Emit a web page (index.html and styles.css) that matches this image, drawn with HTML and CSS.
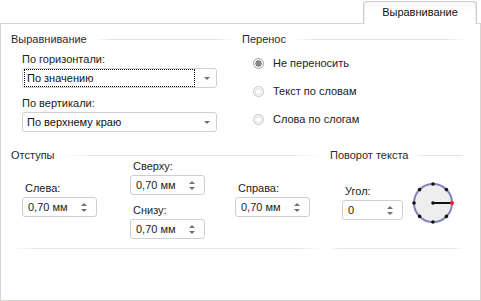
FILE: index.html
```html
<!DOCTYPE html>
<html lang="ru">
<head>
    <meta charset="UTF-8">
    <meta name="viewport" content="width=device-width, initial-scale=1.0">
    <title>Формат ячеек</title>
    <link rel="stylesheet" href="styles.css">
</head>
<body>

    <!-- Onglets -->
    <div class="tabs">
        <div class="tab">Выравнивание</div>
    </div>

    <div class="panel">

        <!-- Выравнивание / Перенос -->
        <div class="row row-top">
            <div class="group">
                <div class="group-title"><span>Выравнивание</span></div>
                <div class="field field-first">
                    <div class="label">По горизонтали:</div>
                    <div class="combo">
                        <span class="combo-value focused">По значению</span>
                        <span class="combo-arrow"></span>
                    </div>
                </div>
                <div class="field">
                    <div class="label">По вертикали:</div>
                    <div class="combo">
                        <span class="combo-value">По верхнему краю</span>
                        <span class="combo-arrow"></span>
                    </div>
                </div>
            </div>

            <div class="group">
                <div class="group-title"><span>Перенос</span></div>
                <div class="radios">
                    <div class="radio-row"><span class="radio checked"></span>Не переносить</div>
                    <div class="radio-row"><span class="radio"></span>Текст по словам</div>
                    <div class="radio-row"><span class="radio"></span>Слова по слогам</div>
                </div>
            </div>
        </div>

        <!-- Отступы / Поворот текста -->
        <div class="row row-bottom">
            <div class="group">
                <div class="group-title"><span>Отступы</span></div>
                <div class="indents">
                    <div class="col">
                        <div class="label lbl-spin">Слева:</div>
                        <div class="spin"><span>0,70 мм</span><span class="spin-arrows"><i class="up"></i><i class="down"></i></span></div>
                    </div>
                    <div class="col">
                        <div class="label lbl-spin">Сверху:</div>
                        <div class="spin"><span>0,70 мм</span><span class="spin-arrows"><i class="up"></i><i class="down"></i></span></div>
                        <div class="label lbl-spin lbl-second">Снизу:</div>
                        <div class="spin"><span>0,70 мм</span><span class="spin-arrows"><i class="up"></i><i class="down"></i></span></div>
                    </div>
                    <div class="col">
                        <div class="label lbl-spin">Справа:</div>
                        <div class="spin"><span>0,70 мм</span><span class="spin-arrows"><i class="up"></i><i class="down"></i></span></div>
                    </div>
                </div>
            </div>

            <div class="group">
                <div class="group-title"><span>Поворот текста</span></div>
                <div class="rotate">
                    <div class="col">
                        <div class="label lbl-spin">Угол:</div>
                        <div class="spin spin-angle"><span>0</span><span class="spin-arrows"><i class="up"></i><i class="down"></i></span></div>
                    </div>
                    <svg class="dial" width="42" height="42" viewBox="0 0 42 42">
                        <circle cx="21" cy="21" r="19" fill="#eeeeee" stroke="#8282bc" stroke-width="2"/>
                        <g fill="#111">
                            <circle cx="21" cy="2" r="1.8"/>
                            <circle cx="34.4" cy="7.6" r="1.8"/>
                            <circle cx="2" cy="21" r="1.8"/>
                            <circle cx="7.6" cy="7.6" r="1.8"/>
                            <circle cx="7.6" cy="34.4" r="1.8"/>
                            <circle cx="21" cy="40" r="1.8"/>
                            <circle cx="34.4" cy="34.4" r="1.8"/>
                            <circle cx="21" cy="21" r="1.8"/>
                        </g>
                        <line x1="21" y1="21" x2="39" y2="21" stroke="#111" stroke-width="2"/>
                        <circle cx="40" cy="21" r="2" fill="#ff1a1a"/>
                    </svg>
                </div>
            </div>
        </div>

        <!-- Séparateurs du bas -->
        <div class="row row-footer">
            <span class="sep"></span>
            <span class="sep"></span>
        </div>

    </div>

</body>
</html>
```

FILE: styles.css
```css
body {
    margin: 0;
    width: 481px;
    height: 301px;
    overflow: hidden;
    background: #fff;
    font-family: "Liberation Sans", Arial, sans-serif;
    font-size: 11px;
    color: #222;
}

/* Onglets */
.tabs {
    height: 23px;
    display: flex;
    justify-content: flex-end;
    padding-right: 4px;
}

.tab {
    position: relative;
    z-index: 1;
    box-sizing: border-box;
    width: 114px;
    height: 23px;
    margin-top: 1px;
    border: 1px solid #cfcfc9;
    border-bottom: none;
    border-radius: 3px 3px 0 0;
    background: linear-gradient(#f6f6f6, #fff 40%);
    box-shadow: inset 1px 0 0 #ececec, inset -1px 0 0 #ececec;
    text-align: center;
    line-height: 21px;
    color: #111;
}

/* Panneau */
.panel {
    box-sizing: border-box;
    height: 278px;
    border: 1px solid #d6d6ce;
    padding: 8px 14px 0 10px;
}

.row {
    display: grid;
}

.row-top {
    grid-template-columns: 222px 1fr;
    column-gap: 9px;
    margin-bottom: 15px;
}

.row-bottom,
.row-footer {
    grid-template-columns: 311px 1fr;
    column-gap: 8px;
}

.group-title {
    display: flex;
    align-items: center;
    height: 14px;
    line-height: 14px;
    color: #2a2a2a;
}

.group-title::after {
    content: "";
    flex: 1;
    height: 1px;
    margin-left: 8px;
    background: linear-gradient(to right, rgba(224,224,224,0), #e4e4e4 12%, #e4e4e4 88%, rgba(224,224,224,0));
}

.label {
    line-height: 14px;
    margin-bottom: 2px;
}

/* Listes déroulantes */
.field {
    padding-left: 11px;
    margin-top: 8px;
}

.field-first {
    margin-top: 6px;
}

.combo {
    display: flex;
    align-items: center;
    box-sizing: border-box;
    width: 195px;
    height: 20px;
    border: 1px solid #cfcfcf;
    border-radius: 3px;
    background: #fff;
}

.combo-value {
    box-sizing: border-box;
    width: 171px;
    height: 18px;
    margin-left: 1px;
    padding-left: 2px;
    border: 1px dotted transparent;
    line-height: 16px;
    color: #111;
}

.combo-value.focused {
    border-color: #000;
}

.combo-arrow {
    margin-left: 9px;
    width: 0;
    height: 0;
    border-left: 3px solid transparent;
    border-right: 3px solid transparent;
    border-top: 3px solid #707070;
}

/* Boutons radio */
.radios {
    margin-top: 3px;
    padding-left: 11px;
}

.radio-row {
    display: flex;
    align-items: center;
    height: 28px;
}

.radio {
    box-sizing: border-box;
    width: 11px;
    height: 11px;
    margin-right: 9px;
    border: 1px solid #c4c4c4;
    border-radius: 50%;
    background: #fff;
    box-shadow: inset 0 0 0 1px #fff, inset 0 0 0 2px #e2e2e2;
}

.radio.checked {
    border-color: #a0a0a0;
    background: radial-gradient(circle, #8a8a8a 0, #8a8a8a 2.2px, #5e5e5e 2.8px, #fff 3.4px);
    box-shadow: none;
}

/* Compteurs */
.indents {
    display: grid;
    grid-template-columns: 108px 105px 75px;
    align-items: center;
    padding-left: 11px;
    margin-top: -3px;
}

.lbl-spin {
    padding-left: 3px;
}

.lbl-second {
    margin-top: 8px;
}

.spin {
    display: flex;
    align-items: center;
    justify-content: space-between;
    box-sizing: border-box;
    width: 75px;
    height: 20px;
    padding: 0 9px 0 5px;
    border: 1px solid #cfcfcf;
    border-radius: 3px;
    color: #1c1c1c;
}

.spin-angle {
    width: 61px;
}

.spin-arrows {
    display: flex;
    flex-direction: column;
    gap: 3px;
}

.spin-arrows i {
    width: 0;
    height: 0;
    border-left: 3px solid transparent;
    border-right: 3px solid transparent;
}

.spin-arrows .up {
    border-bottom: 3px solid #707070;
}

.spin-arrows .down {
    border-top: 3px solid #707070;
}

/* Rotation */
.rotate {
    display: flex;
    align-items: center;
    padding-left: 12px;
    margin-top: 18px;
}

.dial {
    margin-left: 9px;
    margin-top: 2px;
}

/* Séparateurs */
.row-footer {
    margin-top: 9px;
}

.sep {
    height: 1px;
    background: linear-gradient(to right, rgba(224,224,224,0), #e6e6e6 8%, #e6e6e6 92%, rgba(224,224,224,0));
}

.row-footer .sep:last-child {
    margin-right: 3px;
}
```
